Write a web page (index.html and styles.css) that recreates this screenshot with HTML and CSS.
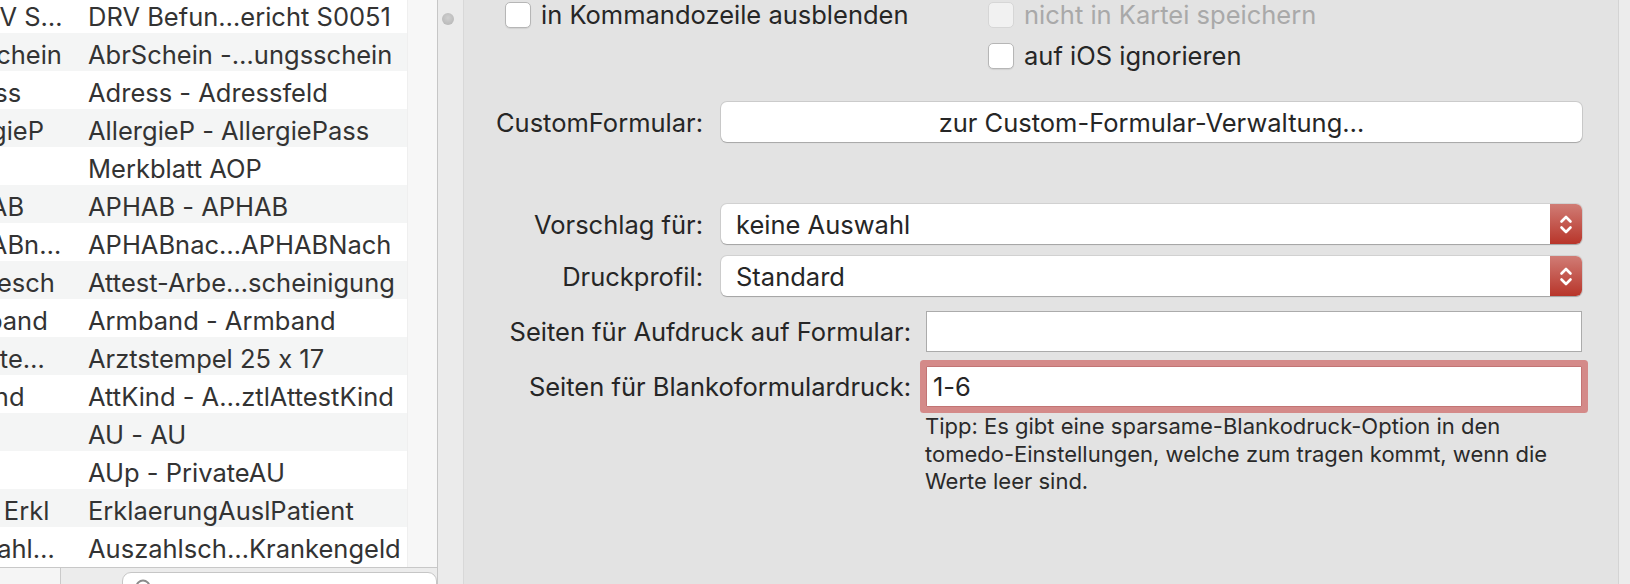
FILE: index.html
```html
<!DOCTYPE html>
<html lang="de">
<head>
  <meta charset="UTF-8" />
  <title>Formular-Einstellungen</title>
  <link rel="stylesheet" href="styles.css">
</head>
<body>
  <div class="window">

    <!-- Formularliste -->
    <div class="sidebar">
      <div class="list-area">
        <div class="list">
          <div class="rows">
            <div class="row"><span class="c1 shift">DRV S0051</span><span class="c2">DRV Befun…ericht S0051</span></div>
            <div class="row"><span class="c1">AbrSchein</span><span class="c2">AbrSchein -…ungsschein</span></div>
            <div class="row"><span class="c1">Adress</span><span class="c2">Adress - Adressfeld</span></div>
            <div class="row"><span class="c1">AllergieP</span><span class="c2">AllergieP - AllergiePass</span></div>
            <div class="row"><span class="c1"></span><span class="c2">Merkblatt AOP</span></div>
            <div class="row"><span class="c1">APHAB</span><span class="c2">APHAB - APHAB</span></div>
            <div class="row"><span class="c1">APHABnach</span><span class="c2">APHABnac…APHABNach</span></div>
            <div class="row"><span class="c1">ArbBesch</span><span class="c2">Attest-Arbe…scheinigung</span></div>
            <div class="row"><span class="c1">Armband</span><span class="c2">Armband - Armband</span></div>
            <div class="row"><span class="c1">Arztstempel</span><span class="c2">Arztstempel 25 x 17</span></div>
            <div class="row"><span class="c1">AttKind</span><span class="c2">AttKind - A…ztlAttestKind</span></div>
            <div class="row"><span class="c1">AU</span><span class="c2">AU - AU</span></div>
            <div class="row"><span class="c1">AUp</span><span class="c2">AUp - PrivateAU</span></div>
            <div class="row"><span class="c1">Ausl. Erkl</span><span class="c2">ErklaerungAuslPatient</span></div>
            <div class="row"><span class="c1">Auszahlschein</span><span class="c2">Auszahlsch…Krankengeld</span></div>
          </div>
        </div>
        <div class="track"></div>
      </div>
      <div class="bottom-bar">
        <div class="bar-seg"></div>
        <div class="search">
          <svg class="lupe" width="20" height="20" viewBox="0 0 20 20">
            <circle cx="8" cy="8" r="6.5" fill="none" stroke="#8a8a8a" stroke-width="2" />
          </svg>
          <span>Suchen</span>
        </div>
      </div>
    </div>

    <div class="splitter"><span class="knob"></span></div>

    <!-- Einstellungen -->
    <div class="panel">
      <div class="checks">
        <div class="check-row">
          <label class="check"><span class="box"></span>in Kommandozeile ausblenden</label>
          <label class="check disabled"><span class="box"></span>nicht in Kartei speichern</label>
        </div>
        <div class="check-row">
          <label class="check col-b"><span class="box"></span>auf iOS ignorieren</label>
        </div>
      </div>

      <div class="field group-a custom">
        <span class="label">CustomFormular:</span>
        <div class="button">zur Custom-Formular-Verwaltung…</div>
      </div>

      <div class="field group-a vorschlag">
        <span class="label">Vorschlag für:</span>
        <div class="select">
          <span class="value">keine Auswahl</span>
          <span class="stepper">
            <svg width="32" height="40" viewBox="0 0 32 40">
              <path d="M11.5 17.5 L16 13 L20.5 17.5 M11.5 23.5 L16 28 L20.5 23.5" fill="none" stroke="#fff" stroke-width="2.6" stroke-linecap="round" stroke-linejoin="round" />
            </svg>
          </span>
        </div>
      </div>

      <div class="field group-a druck">
        <span class="label">Druckprofil:</span>
        <div class="select">
          <span class="value">Standard</span>
          <span class="stepper">
            <svg width="32" height="40" viewBox="0 0 32 40">
              <path d="M11.5 17.5 L16 13 L20.5 17.5 M11.5 23.5 L16 28 L20.5 23.5" fill="none" stroke="#fff" stroke-width="2.6" stroke-linecap="round" stroke-linejoin="round" />
            </svg>
          </span>
        </div>
      </div>

      <div class="field group-b aufdruck">
        <span class="label">Seiten für Aufdruck auf Formular:</span>
        <div class="input"></div>
      </div>

      <div class="field group-b blanko">
        <span class="label">Seiten für Blankoformulardruck:</span>
        <div class="input focused">1-6</div>
      </div>

      <p class="tipp">Tipp: Es gibt eine sparsame-Blankodruck-Option in den<br>tomedo-Einstellungen, welche zum tragen kommt, wenn die<br>Werte leer sind.</p>
    </div>

    <div class="edge"></div>
  </div>
</body>
</html>
```

FILE: styles.css
```css
:root {
  --fenster: #e3e3e3;
  --text: #262626;
  --text-aus: #a9a9a9;
  --streifen: #f4f5f5;
  --linie: #c6c6c6;
  --akzent: #d48a89;
}

* {
  box-sizing: border-box;
}

body {
  margin: 0;
  font-family: Inter, "Noto Sans", sans-serif;
  font-feature-settings: "calt" 0;
  background-color: var(--fenster);
  color: var(--text);
  overflow: hidden;
}

.window {
  display: flex;
  height: 584px;
}

/* Liste links */

.sidebar {
  width: 438px;
  flex: none;
  display: flex;
  flex-direction: column;
  border-right: 1px solid var(--linie);
  background-color: #ececec;
}

.list-area {
  height: 568px;
  display: flex;
  border-bottom: 1px solid #c8c8c8;
  overflow: hidden;
}

.list {
  width: 407px;
  background-color: #fff;
  overflow: hidden;
}

.rows {
  margin-top: -5px;
  margin-left: -63px;
}

.row {
  display: grid;
  grid-template-columns: 129px 1fr;
  column-gap: 22px;
  height: 38px;
  padding-top: 5px;
  align-items: center;
  font-size: 25.5px;
  color: #333;
  white-space: nowrap;
}

.row:nth-child(even) {
  background-color: var(--streifen);
}

.c1,
.c2 {
  overflow: hidden;
}

.c1 {
  text-overflow: ellipsis;
}

.c1.shift {
  padding-left: 28px;
}

.track {
  flex: 1;
  background-color: #f7f7f7;
  border-left: 1px solid #efefef;
}

.bottom-bar {
  flex: 1;
  display: flex;
  overflow: hidden;
}

.bar-seg {
  width: 61px;
  flex: none;
  background-color: #f5f5f5;
  border-right: 1px solid #cacaca;
}

.search {
  flex: 1;
  margin: 4px 0 0 61px;
  height: 30px;
  display: flex;
  align-items: flex-start;
  gap: 18px;
  padding: 6px 0 0 12px;
  background-color: #fff;
  border: 1px solid #c6c6c6;
  border-radius: 9px;
  font-size: 22px;
  color: #a0a0a0;
}

.splitter {
  width: 26px;
  flex: none;
  background-color: #ebebeb;
  border-right: 1px solid #d8d8d8;
  padding: 13px 0 0 4px;
}

.knob {
  display: block;
  width: 12px;
  height: 12px;
  border-radius: 50%;
  background: radial-gradient(circle at 50% 40%, #cfcfcf, #b3b3b3);
}

/* Einstellungen rechts */

.panel {
  flex: 1;
  padding: 1px 36px 0 0;
}

.edge {
  width: 12px;
  flex: none;
  background-color: #ececec;
  border-left: 1px solid #d4d4d4;
}

.checks {
  display: flex;
  flex-direction: column;
  gap: 14px;
}

.check-row {
  display: grid;
  grid-template-columns: 483px 1fr;
  padding-left: 41px;
  height: 27px;
}

.check {
  display: flex;
  align-items: center;
  gap: 10px;
  height: 27px;
  line-height: 27px;
  font-size: 25.5px;
}

.col-b {
  grid-column: 2;
}

.box {
  width: 26px;
  height: 26px;
  flex: none;
  background-color: #fff;
  border: 1px solid #b6b6b6;
  border-radius: 5px;
  box-shadow: 0 1px 1px rgba(0, 0, 0, 0.08);
}

.check.disabled {
  color: var(--text-aus);
}

.check.disabled .box {
  background-color: #f1f1f1;
  border-color: #d6d6d6;
  box-shadow: none;
}

.field {
  display: grid;
  align-items: center;
  font-size: 25.5px;
}

.group-a {
  grid-template-columns: 239px 1fr;
  column-gap: 18px;
}

.group-b {
  grid-template-columns: 447px 1fr;
  column-gap: 15px;
}

.label {
  text-align: right;
  white-space: nowrap;
}

.custom {
  margin-top: 33px;
}

.vorschlag {
  margin-top: 62px;
}

.druck {
  margin-top: 12px;
}

.aufdruck {
  margin-top: 15px;
}

.blanko {
  margin-top: 14px;
}

.button {
  height: 40px;
  display: flex;
  align-items: center;
  justify-content: center;
  background-color: #fff;
  border-radius: 6px;
  box-shadow: 0 0 0 1px rgba(0, 0, 0, 0.1), 0 1px 1px rgba(0, 0, 0, 0.18);
}

.select {
  height: 40px;
  display: flex;
  align-items: center;
  background-color: #fff;
  border-radius: 6px;
  box-shadow: 0 0 0 1px rgba(0, 0, 0, 0.08), 0 1px 1px rgba(0, 0, 0, 0.22);
  overflow: hidden;
}

.select .value {
  flex: 1;
  padding-left: 15px;
}

.stepper {
  width: 32px;
  height: 40px;
  flex: none;
  background: linear-gradient(#d07c75, #b8352a);
}

.stepper svg {
  display: block;
}

.input {
  height: 41px;
  display: flex;
  align-items: center;
  padding-left: 6px;
  background-color: #fff;
  border: 1px solid #ababab;
}

.input.focused {
  border-color: #c27474;
  border-radius: 1px;
  box-shadow: 0 0 0 6px var(--akzent);
}

.tipp {
  margin: 6px 0 0 461px;
  font-size: 22px;
  line-height: 27.5px;
  color: #2a2a2a;
}
```
